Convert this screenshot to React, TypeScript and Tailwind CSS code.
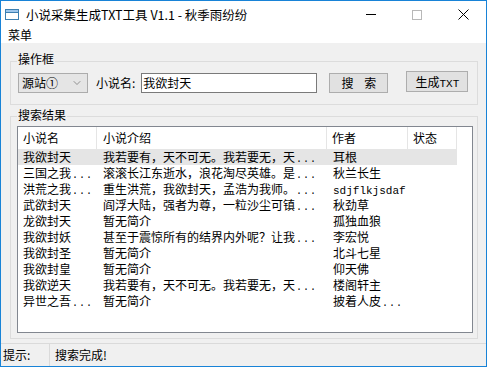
import React from 'react';
import { ChevronDown } from 'lucide-react';

const cjk = "font-['Noto_Sans_CJK_SC','Noto_Sans',sans-serif]";
const mono = "font-['Liberation_Mono',monospace] text-[10px]";

type Row = { name: string; nameMore?: boolean; intro: string; introMore?: boolean; author: React.ReactNode };

function Dots() {
  return <span className={mono + ' tracking-[1px] pl-[1px]'}>...</span>;
}

const rows: Row[] = [
  { name: '我欲封天', intro: '我若要有，天不可无。我若要无，天', introMore: true, author: '耳根' },
  { name: '三国之我', nameMore: true, intro: '滚滚长江东逝水，浪花淘尽英雄。是', introMore: true, author: '秋兰长生' },
  { name: '洪荒之我', nameMore: true, intro: '重生洪荒，我欲封天，孟浩为我师。', introMore: true, author: <span className={mono + ' text-[11px]'}>sdjflkjsdaf</span> },
  { name: '武欲封天', intro: '阎浮大陆，强者为尊，一粒沙尘可镇', introMore: true, author: '秋劲草' },
  { name: '龙欲封天', intro: '暂无简介', author: '孤独血狼' },
  { name: '我欲封妖', intro: '甚至于震惊所有的结界内外呢？让我', introMore: true, author: '李宏悦' },
  { name: '我欲封圣', intro: '暂无简介', author: '北斗七星' },
  { name: '我欲封皇', intro: '暂无简介', author: '仰天佛' },
  { name: '我欲逆天', intro: '我若要有，天不可无。我若要无，天', introMore: true, author: '楼阁轩主' },
  { name: '异世之吾', nameMore: true, intro: '暂无简介', author: <>披着人皮<Dots /></> },
];

export default function App() {
  return (
    <div className={`w-[487px] h-[367px] border border-[#1883d7] bg-[#f0f0f0] flex flex-col overflow-hidden text-[12px] text-black ${cjk}`}>
      {/* title bar */}
      <div className="h-[27px] bg-white flex items-center">
        <div className="ml-[4px] w-[14px] h-[11px] border border-[#3c7fb1] flex flex-col">
          <div className="h-[3px] bg-[#9dc6ec] border-b border-[#3c7fb1]" />
        </div>
        <span className="ml-[7px] text-[12.5px] leading-[16px]">小说采集生成TXT工具 V1.1 - 秋季雨纷纷</span>
        <div className="ml-auto flex h-full">
          <div className="w-[46px] flex items-center justify-center">
            <div className="w-[10px] h-px bg-black" />
          </div>
          <div className="w-[46px] flex items-center justify-center">
            <div className="w-[10px] h-[10px] border border-[#b8b8b8]" />
          </div>
          <div className="w-[46px] flex items-center justify-center">
            <svg width="11" height="11" viewBox="0 0 11 11">
              <path d="M0.5 0.5 L10.5 10.5 M10.5 0.5 L0.5 10.5" stroke="#000" strokeWidth="1" />
            </svg>
          </div>
        </div>
      </div>

      {/* menu */}
      <div className="h-[15px] bg-white pl-[7px] leading-[13px]">菜单</div>

      {/* group 1 */}
      <fieldset className="mt-[11px] ml-[9px] w-[468px] border border-[#dcdcdc] pl-[7px] pb-[11px]">
        <legend className="-ml-[1px] px-[1px] leading-[14px] relative -top-[2px]">操作框</legend>
        <div className="flex items-start pt-[3px]">
          <div className="mt-[2px] w-[70px] h-[20px] bg-[#e5e5e5] border border-[#acacac] flex items-center pl-[3px] pr-[4px]">
            <span>源站①</span>
            <ChevronDown size={12} strokeWidth={1.2} className="ml-auto text-[#555]" />
          </div>
          <span className="mt-[2px] ml-[8px] leading-[20px]">小说名:</span>
          <div className="mt-[2px] ml-[6px] w-[176px] h-[20px] bg-white border border-[#7a7a7a] pl-[1px] leading-[18px]">
            我欲封天
          </div>
          <button className="mt-[2px] ml-[12px] w-[59px] h-[20px] bg-[#e1e1e1] border border-[#adadad] leading-[18px]">
            搜&nbsp;&nbsp;&nbsp;&nbsp;索
          </button>
          <button className="ml-[18px] w-[62px] h-[21px] bg-[#e1e1e1] border border-[#adadad] leading-[19px]">
            生成<span className={mono + ' text-[11px]'}>TXT</span>
          </button>
        </div>
      </fieldset>

      {/* group 2 */}
      <fieldset className="mt-[4px] ml-[9px] w-[468px] border border-[#dcdcdc] pl-[6px] pb-[5px]">
        <legend className="px-[1px] leading-[14px] relative -top-[1px]">搜索结果</legend>
        <div className="mt-[3px] w-[456px] h-[207px] bg-white border border-[#828790]">
          <div className="flex h-[22px] items-center">
            <div className="w-[79px] h-full pl-[5px] flex items-center border-r border-[#e5e5e5]">小说名</div>
            <div className="w-[230px] h-full pl-[6px] flex items-center border-r border-[#e5e5e5]">小说介绍</div>
            <div className="w-[81px] h-full pl-[5px] flex items-center border-r border-[#e5e5e5]">作者</div>
            <div className="w-[49px] h-full pl-[5px] flex items-center border-r border-[#e5e5e5]">状态</div>
          </div>
          {rows.map((r, i) => (
            <div key={i} className={`flex h-[16px] w-[439px] leading-[16px] ${i === 0 ? 'bg-[#e5e5e5]' : ''}`}>
              <div className="w-[79px] pl-[5px] whitespace-nowrap">
                {r.name}
                {r.nameMore && <Dots />}
              </div>
              <div className="w-[230px] pl-[6px] whitespace-nowrap">
                {r.intro}
                {r.introMore && <Dots />}
              </div>
              <div className="w-[81px] pl-[6px] whitespace-nowrap">{r.author}</div>
              <div className="w-[49px]" />
            </div>
          ))}
        </div>
      </fieldset>

      {/* status bar */}
      <div className="mt-auto h-[23px] border-t border-[#dadada] flex items-center">
        <div className="w-[49px] h-full pl-[2px] flex items-center border-r border-[#dadada]">提示:</div>
        <div className="pl-[5px]">搜索完成!</div>
      </div>
    </div>
  );
}
